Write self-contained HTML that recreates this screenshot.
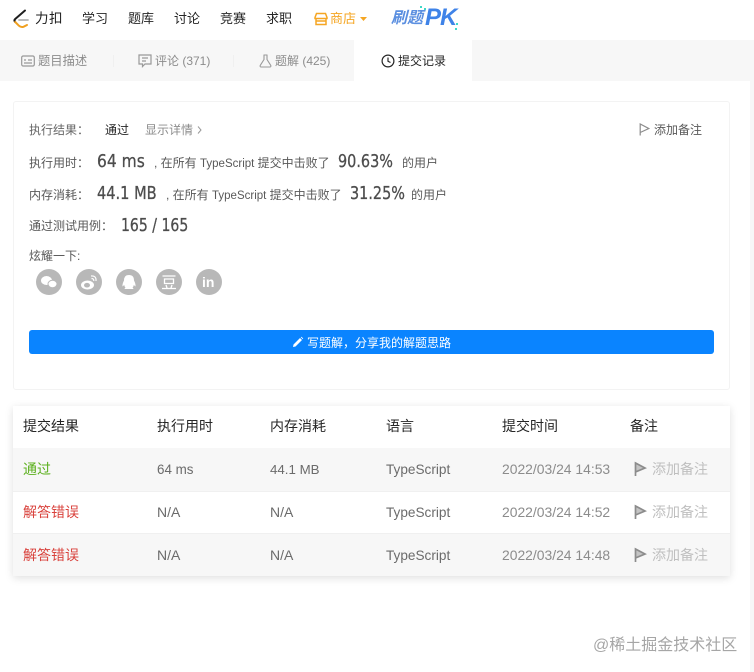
<!DOCTYPE html>
<html lang="zh">
<head>
<meta charset="utf-8">
<style>
html,body{margin:0;padding:0;background:#fff}
body{width:754px;height:672px;position:relative;overflow:hidden;font-family:"Liberation Sans","Noto Sans CJK SC",sans-serif;color:#595959}
.t{position:absolute;white-space:nowrap;line-height:20px;height:20px}
.n{font-size:13px;color:#262626;top:9px}
.tab{font-size:12.3px;color:#8c8c8c;top:51px}
.l{font-size:12px;color:#595959}
.b{font-size:18px;color:#4d4d4d;font-family:"DejaVu Sans","Liberation Sans",sans-serif;transform-origin:left center;transform:scaleX(.84);-webkit-text-stroke:.3px #4d4d4d}
.s{font-size:12px;color:#595959}
.s i{font-style:normal;font-size:11.5px}
.th{font-size:14px;color:#262626;top:416px}
.td{font-size:14px;color:#6b6b6b}
.time{color:#8c8c8c;font-size:13.9px}
.red{color:#d9423c}
.add{font-size:14px;color:#bfbfbf;left:652px}
.soc{position:absolute;top:269px;width:26px;height:26px;border-radius:50%;background:#b8b8b8}
svg{position:absolute;display:block}
.row{position:absolute;left:13px;width:717px;height:43px}
</style>
</head>
<body>
<!-- top nav -->
<svg style="left:12px;top:9px" width="20" height="21" viewBox="0 0 20 21">
<path d="M13 1.500L3.200 10Q1.700 11.500 3.200 13" fill="none" stroke="#1f1f1f" stroke-width="2" stroke-linecap="round"/>
<path d="M3.200 13L7 16.800Q9 18.600 11.500 17.800L15 16" fill="none" stroke="#f0a020" stroke-width="2" stroke-linecap="round"/>
<path d="M7 11H16" stroke="#b3b3b3" stroke-width="1.800" stroke-linecap="round"/>
</svg>
<span class="t" style="left:35px;top:9px;font-size:13.500px;color:#1f1f1f;letter-spacing:.5px">力扣</span>
<span class="t n" style="left:82px">学习</span>
<span class="t n" style="left:128px">题库</span>
<span class="t n" style="left:174px">讨论</span>
<span class="t n" style="left:220px">竞赛</span>
<span class="t n" style="left:266px">求职</span>
<svg style="left:314px;top:12px" width="14" height="14" viewBox="0 0 14 14"><path d="M2.500 1.500H11.500L13 5.500V6.500H1V5.500ZM2 6.500V12.500H12V6.500M2 9H12" fill="none" stroke="#f5a623" stroke-width="1.500"/></svg>
<span class="t n" style="left:330px;color:#f5a623">商店</span>
<svg style="left:360px;top:17px" width="7" height="4"><path d="M0 0H7L3.500 4Z" fill="#f5a623"/></svg>
<span class="t" style="left:391px;top:9px;font-size:16px;font-weight:bold;font-style:italic;color:#5b8fe0">刷题</span>
<span class="t" style="left:425px;top:5px;font-size:24px;line-height:26px;height:26px;font-weight:bold;font-style:italic;color:#3f83e8;letter-spacing:-1px">PK</span>
<svg style="left:418px;top:4px" width="44" height="28"><rect x="2" y="2" width="2" height="2" fill="#3fd8c8"/><rect x="6" y="4" width="2" height="2" fill="#3fd8c8"/><rect x="38" y="19" width="2" height="2" fill="#3fd8c8"/><rect x="37" y="24" width="2" height="2" fill="#3fd8c8"/></svg>

<!-- tab bar -->
<div style="position:absolute;left:0;top:40px;width:754px;height:41px;background:#f7f7f7"></div>
<div style="position:absolute;left:354px;top:40px;width:118px;height:41px;background:#fff"></div>
<div style="position:absolute;left:113px;top:55px;width:1px;height:12px;background:#f0f0f0"></div>
<div style="position:absolute;left:233px;top:55px;width:1px;height:12px;background:#f0f0f0"></div>
<svg style="left:21px;top:55px" width="14" height="12" viewBox="0 0 14 12"><rect x=".7" y="1" width="12.600" height="10" rx="1.500" fill="none" stroke="#999" stroke-width="1.200"/><path d="M3 5H5M7 5H11M3 8H11" stroke="#999" stroke-width="1.200"/></svg>
<span class="t tab" style="left:38px">题目描述</span>
<svg style="left:138px;top:54px" width="14" height="14" viewBox="0 0 14 14"><path d="M1 1H13V10H7L4.500 12.500V10H1Z" fill="none" stroke="#999" stroke-width="1.200"/><path d="M4 4H10M4 7H8" stroke="#999" stroke-width="1.200"/></svg>
<span class="t tab" style="left:155px;font-size:12px">评论 (371)</span>
<svg style="left:259px;top:54px" width="13" height="14" viewBox="0 0 13 14"><path d="M4.500 1H8.500M5 1V5.500L1.200 11.500Q.8 13 2.200 13H10.800Q12.200 13 11.800 11.500L8 5.500V1" fill="none" stroke="#999" stroke-width="1.100"/></svg>
<span class="t tab" style="left:275px;font-size:12px">题解 (425)</span>
<svg style="left:381px;top:54px" width="14" height="14" viewBox="0 0 14 14"><circle cx="7" cy="7" r="5.900" fill="none" stroke="#262626" stroke-width="1.200"/><path d="M7 3.500V7.300L9.500 8.500" fill="none" stroke="#262626" stroke-width="1.200"/></svg>
<span class="t tab" style="left:398px;color:#262626;font-size:12px">提交记录</span>

<!-- right strip -->
<div style="position:absolute;left:750px;top:81px;width:4px;height:591px;background:#f7f7f7"></div>

<!-- result card -->
<div style="position:absolute;left:13px;top:101px;width:715px;height:287px;border:1px solid #f3f3f3;border-radius:3px;background:#fff;box-sizing:content-box"></div>
<span class="t l" style="left:29px;top:120px;color:#666">执行结果：</span>
<span class="t" style="left:105px;top:120px;font-size:12px;color:#262626">通过</span>
<span class="t" style="left:145px;top:120px;font-size:12px;color:#8c8c8c">显示详情</span>
<svg style="left:197px;top:126px" width="5" height="8"><path d="M1 .5L4 4L1 7.500" fill="none" stroke="#999"/></svg>
<svg style="left:639px;top:123px" width="11" height="13" viewBox="0 0 11 13"><path d="M1.200 12.500V1L9.800 5.500L1.200 9.500" fill="none" stroke="#8c8c8c" stroke-width="1.200"/></svg>
<span class="t l" style="left:654px;top:120px">添加备注</span>

<span class="t l" style="left:29px;top:153px">执行用时：</span>
<span class="t b" style="left:97px;top:152px;transform:scaleX(.86)">64 ms</span>
<span class="t s" style="left:154px;top:153px">, 在所有 <i>TypeScript</i> 提交中击败了</span>
<span class="t b" style="left:338px;top:152px;transform:scaleX(.8)">90.63%</span>
<span class="t s" style="left:402px;top:153px">的用户</span>

<span class="t l" style="left:29px;top:185px">内存消耗：</span>
<span class="t b" style="left:97px;top:184px;transform:scaleX(.81)">44.1 MB</span>
<span class="t s" style="left:166px;top:185px">, 在所有 <i>TypeScript</i> 提交中击败了</span>
<span class="t b" style="left:350px;top:184px;transform:scaleX(.8)">31.25%</span>
<span class="t s" style="left:411px;top:185px">的用户</span>

<span class="t l" style="left:29px;top:216px">通过测试用例：</span>
<span class="t b" style="left:121px;top:216px;transform:scaleX(.78)">165 / 165</span>

<span class="t l" style="left:29px;top:246px">炫耀一下:</span>

<div class="soc" style="left:36px"></div>
<svg style="left:36px;top:269px" width="26" height="26"><ellipse cx="10.500" cy="11.500" rx="5.500" ry="4.500" fill="#fff"/><ellipse cx="16.500" cy="15" rx="4.500" ry="3.700" fill="#fff" stroke="#b8b8b8"/></svg>
<div class="soc" style="left:76px"></div>
<svg style="left:76px;top:269px" width="26" height="26"><ellipse cx="11.500" cy="16" rx="6.500" ry="4.500" fill="#fff"/><ellipse cx="11" cy="16.200" rx="3" ry="2.300" fill="#b8b8b8"/><path d="M15 7Q20.500 6.500 20 12M15.500 9.500Q18 9.500 17.800 12" fill="none" stroke="#fff" stroke-width="1.200"/></svg>
<div class="soc" style="left:116px"></div>
<svg style="left:116px;top:269px" width="26" height="26"><path d="M13 6Q18 6 18 11.500Q19.800 15 19.500 17.500L17.800 16Q17.500 18 16.500 18.500Q18 19.500 17 20H9Q8 19.500 9.500 18.500Q8.500 18 8.200 16L6.500 17.500Q6.200 15 8 11.500Q8 6 13 6Z" fill="#fff"/></svg>
<div class="soc" style="left:156px"></div>
<svg style="left:156px;top:269px" width="26" height="26"><path d="M6.500 7H19.500M8.500 10H17.500V14.500H8.500ZM10 16L11 19M16 16L15 19M6 19.500H20" fill="none" stroke="#fff" stroke-width="1.300"/></svg>
<div class="soc" style="left:196px"></div>
<span class="t" style="left:202px;top:272px;font-size:14px;font-weight:bold;color:#fff">in</span>

<!-- button -->
<div style="position:absolute;left:29px;top:330px;width:685px;height:24px;background:#0a84ff;border-radius:3px"></div>
<svg style="left:292px;top:336px" width="12" height="12" viewBox="0 0 12 12"><path d="M1 11L1.500 8.500L8 2L10 4L3.500 10.500ZM8.800 1.200L9.500 .8L11.200 2.500L10.800 3.200Z" fill="#fff"/></svg>
<span class="t" style="left:307px;top:333px;font-size:12px;color:#fff">写题解，分享我的解题思路</span>

<!-- table -->
<div style="position:absolute;left:13px;top:406px;width:717px;height:170px;background:#fff;box-shadow:0 2px 8px rgba(0,0,0,.13)"></div>
<div class="row" style="top:448px;background:#f7f7f7"></div>
<div class="row" style="top:491px;background:#fff;border-top:1px solid #f0f0f0;box-sizing:border-box"></div>
<div class="row" style="top:533px;background:#f7f7f7;border-top:1px solid #f0f0f0;box-sizing:border-box"></div>

<span class="t th" style="left:23px">提交结果</span>
<span class="t th" style="left:157px">执行用时</span>
<span class="t th" style="left:270px">内存消耗</span>
<span class="t th" style="left:386px">语言</span>
<span class="t th" style="left:502px">提交时间</span>
<span class="t th" style="left:630px">备注</span>

<span class="t td" style="left:23px;top:459px;color:#5cb01e">通过</span>
<span class="t td" style="left:157px;top:460px;font-size:13.400px">64 ms</span>
<span class="t td" style="left:270px;top:460px;font-size:13.300px">44.1 MB</span>
<span class="t td" style="left:386px;top:460px;font-size:13.600px">TypeScript</span>
<span class="t td time" style="left:502px;top:459px">2022/03/24 14:53</span>
<svg style="left:634px;top:461px" width="13" height="16" viewBox="0 0 13 16"><path d="M1.500 15V2L11 7L1.500 11" fill="#c4c4c4" stroke="#8c8c8c" stroke-width="1.700"/></svg>
<span class="t add" style="top:459px">添加备注</span>

<span class="t td red" style="left:23px;top:502px">解答错误</span>
<span class="t td" style="left:157px;top:502px">N/A</span>
<span class="t td" style="left:270px;top:502px">N/A</span>
<span class="t td" style="left:386px;top:503px;font-size:13.600px">TypeScript</span>
<span class="t td time" style="left:502px;top:502px">2022/03/24 14:52</span>
<svg style="left:634px;top:504px" width="13" height="16" viewBox="0 0 13 16"><path d="M1.500 15V2L11 7L1.500 11" fill="#c4c4c4" stroke="#8c8c8c" stroke-width="1.700"/></svg>
<span class="t add" style="top:502px">添加备注</span>

<span class="t td red" style="left:23px;top:545px">解答错误</span>
<span class="t td" style="left:157px;top:545px">N/A</span>
<span class="t td" style="left:270px;top:545px">N/A</span>
<span class="t td" style="left:386px;top:546px;font-size:13.600px">TypeScript</span>
<span class="t td time" style="left:502px;top:545px">2022/03/24 14:48</span>
<svg style="left:634px;top:547px" width="13" height="16" viewBox="0 0 13 16"><path d="M1.500 15V2L11 7L1.500 11" fill="#c4c4c4" stroke="#8c8c8c" stroke-width="1.700"/></svg>
<span class="t add" style="top:545px">添加备注</span>

<!-- watermark -->
<span class="t" style="left:593px;top:636px;font-size:16px;color:#a6a6a6">@稀土掘金技术社区</span>
</body>
</html>
